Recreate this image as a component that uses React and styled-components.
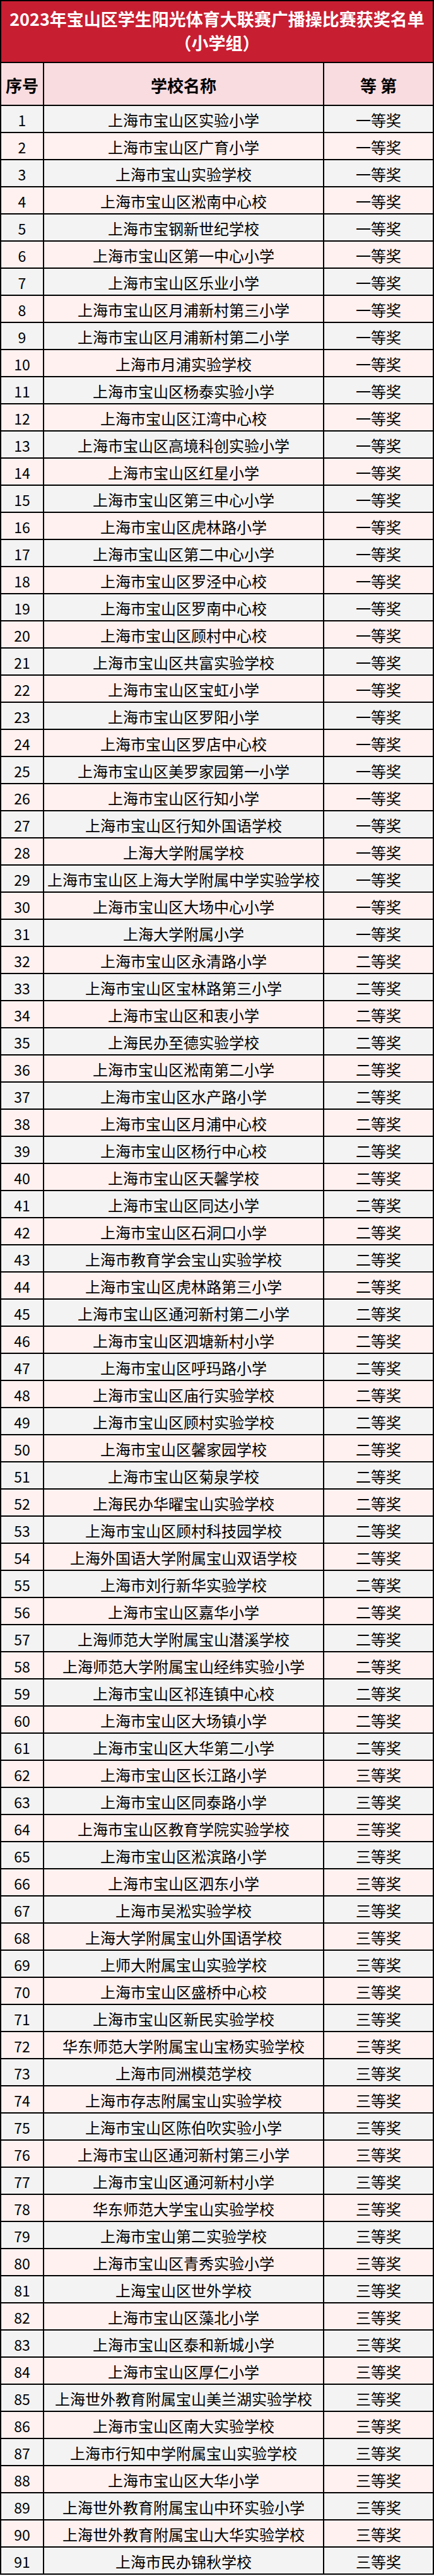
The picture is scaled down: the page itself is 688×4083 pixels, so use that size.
import styled, { createGlobalStyle } from "styled-components";

const GlobalStyle = createGlobalStyle`
  html, body {
    margin: 0;
    padding: 0;
    background: #ffffff;
  }
  body {
    font-family: "Noto Sans CJK SC", "Noto Sans", sans-serif;
    color: #000;
  }
`;

const Sheet = styled.div`
  width: 688px;
  box-sizing: border-box;
  border: 2px solid #000;
  border-bottom: none;
`;

const TitleBar = styled.div`
  height: 98px;
  box-sizing: border-box;
  border-bottom: 2px solid #000;
  background: #c81e32;
  color: #fff;
  display: flex;
  flex-direction: column;
  align-items: center;
  justify-content: center;
  font-weight: 700;
  font-size: 27px;
  line-height: 38px;
  white-space: nowrap;
  padding-bottom: 2px;
`;

const Row = styled.div`
  display: flex;
  height: ${(p) => (p.$head ? 68 : 43)}px;
  box-sizing: border-box;
  border-bottom: 2px solid #000;
  background: ${(p) => (p.$head ? "#f9dce0" : p.$alt ? "#fef1f0" : "#f3f3f3")};
  font-weight: ${(p) => (p.$head ? 700 : 400)};
  font-size: ${(p) => (p.$head ? 26 : 24)}px;
`;

const Cell = styled.div`
  width: ${(p) => p.$w}px;
  flex: ${(p) => (p.$w ? "none" : 1)};
  box-sizing: border-box;
  border-right: ${(p) => (p.$last ? "none" : "2px solid #000")};
  display: flex;
  align-items: center;
  justify-content: center;
  white-space: nowrap;
  padding-top: 2px;
`;

const Num = styled.span`
  font-family: "Noto Sans CJK SC", "Liberation Sans", sans-serif;
  font-size: 23px;
`;

const names = [
  "上海市宝山区实验小学",
  "上海市宝山区广育小学",
  "上海市宝山实验学校",
  "上海市宝山区淞南中心校",
  "上海市宝钢新世纪学校",
  "上海市宝山区第一中心小学",
  "上海市宝山区乐业小学",
  "上海市宝山区月浦新村第三小学",
  "上海市宝山区月浦新村第二小学",
  "上海市月浦实验学校",
  "上海市宝山区杨泰实验小学",
  "上海市宝山区江湾中心校",
  "上海市宝山区高境科创实验小学",
  "上海市宝山区红星小学",
  "上海市宝山区第三中心小学",
  "上海市宝山区虎林路小学",
  "上海市宝山区第二中心小学",
  "上海市宝山区罗泾中心校",
  "上海市宝山区罗南中心校",
  "上海市宝山区顾村中心校",
  "上海市宝山区共富实验学校",
  "上海市宝山区宝虹小学",
  "上海市宝山区罗阳小学",
  "上海市宝山区罗店中心校",
  "上海市宝山区美罗家园第一小学",
  "上海市宝山区行知小学",
  "上海市宝山区行知外国语学校",
  "上海大学附属学校",
  "上海市宝山区上海大学附属中学实验学校",
  "上海市宝山区大场中心小学",
  "上海大学附属小学",
  "上海市宝山区永清路小学",
  "上海市宝山区宝林路第三小学",
  "上海市宝山区和衷小学",
  "上海民办至德实验学校",
  "上海市宝山区淞南第二小学",
  "上海市宝山区水产路小学",
  "上海市宝山区月浦中心校",
  "上海市宝山区杨行中心校",
  "上海市宝山区天馨学校",
  "上海市宝山区同达小学",
  "上海市宝山区石洞口小学",
  "上海市教育学会宝山实验学校",
  "上海市宝山区虎林路第三小学",
  "上海市宝山区通河新村第二小学",
  "上海市宝山区泗塘新村小学",
  "上海市宝山区呼玛路小学",
  "上海市宝山区庙行实验学校",
  "上海市宝山区顾村实验学校",
  "上海市宝山区馨家园学校",
  "上海市宝山区菊泉学校",
  "上海民办华曜宝山实验学校",
  "上海市宝山区顾村科技园学校",
  "上海外国语大学附属宝山双语学校",
  "上海市刘行新华实验学校",
  "上海市宝山区嘉华小学",
  "上海师范大学附属宝山潜溪学校",
  "上海师范大学附属宝山经纬实验小学",
  "上海市宝山区祁连镇中心校",
  "上海市宝山区大场镇小学",
  "上海市宝山区大华第二小学",
  "上海市宝山区长江路小学",
  "上海市宝山区同泰路小学",
  "上海市宝山区教育学院实验学校",
  "上海市宝山区淞滨路小学",
  "上海市宝山区泗东小学",
  "上海市吴淞实验学校",
  "上海大学附属宝山外国语学校",
  "上师大附属宝山实验学校",
  "上海市宝山区盛桥中心校",
  "上海市宝山区新民实验学校",
  "华东师范大学附属宝山宝杨实验学校",
  "上海市同洲模范学校",
  "上海市存志附属宝山实验学校",
  "上海市宝山区陈伯吹实验小学",
  "上海市宝山区通河新村第三小学",
  "上海市宝山区通河新村小学",
  "华东师范大学宝山实验学校",
  "上海市宝山第二实验学校",
  "上海市宝山区青秀实验小学",
  "上海宝山区世外学校",
  "上海市宝山区藻北小学",
  "上海市宝山区泰和新城小学",
  "上海市宝山区厚仁小学",
  "上海世外教育附属宝山美兰湖实验学校",
  "上海市宝山区南大实验学校",
  "上海市行知中学附属宝山实验学校",
  "上海市宝山区大华小学",
  "上海世外教育附属宝山中环实验小学",
  "上海世外教育附属宝山大华实验学校",
  "上海市民办锦秋学校",
];

function prizeFor(n) {
  if (n <= 31) return "一等奖";
  if (n <= 61) return "二等奖";
  return "三等奖";
}

export default function App() {
  return (
    <>
      <GlobalStyle />
      <Sheet>
        <TitleBar>
          <div>2023年宝山区学生阳光体育大联赛广播操比赛获奖名单</div>
          <div>（小学组）</div>
        </TitleBar>
        <Row $head>
          <Cell $w={68}>序号</Cell>
          <Cell $w={444}>学校名称</Cell>
          <Cell $last>等 第</Cell>
        </Row>
        {names.map((name, i) => (
          <Row key={i} $alt={i % 2 === 1}>
            <Cell $w={68}>
              <Num>{i + 1}</Num>
            </Cell>
            <Cell $w={444}>{name}</Cell>
            <Cell $last>{prizeFor(i + 1)}</Cell>
          </Row>
        ))}
      </Sheet>
    </>
  );
}
